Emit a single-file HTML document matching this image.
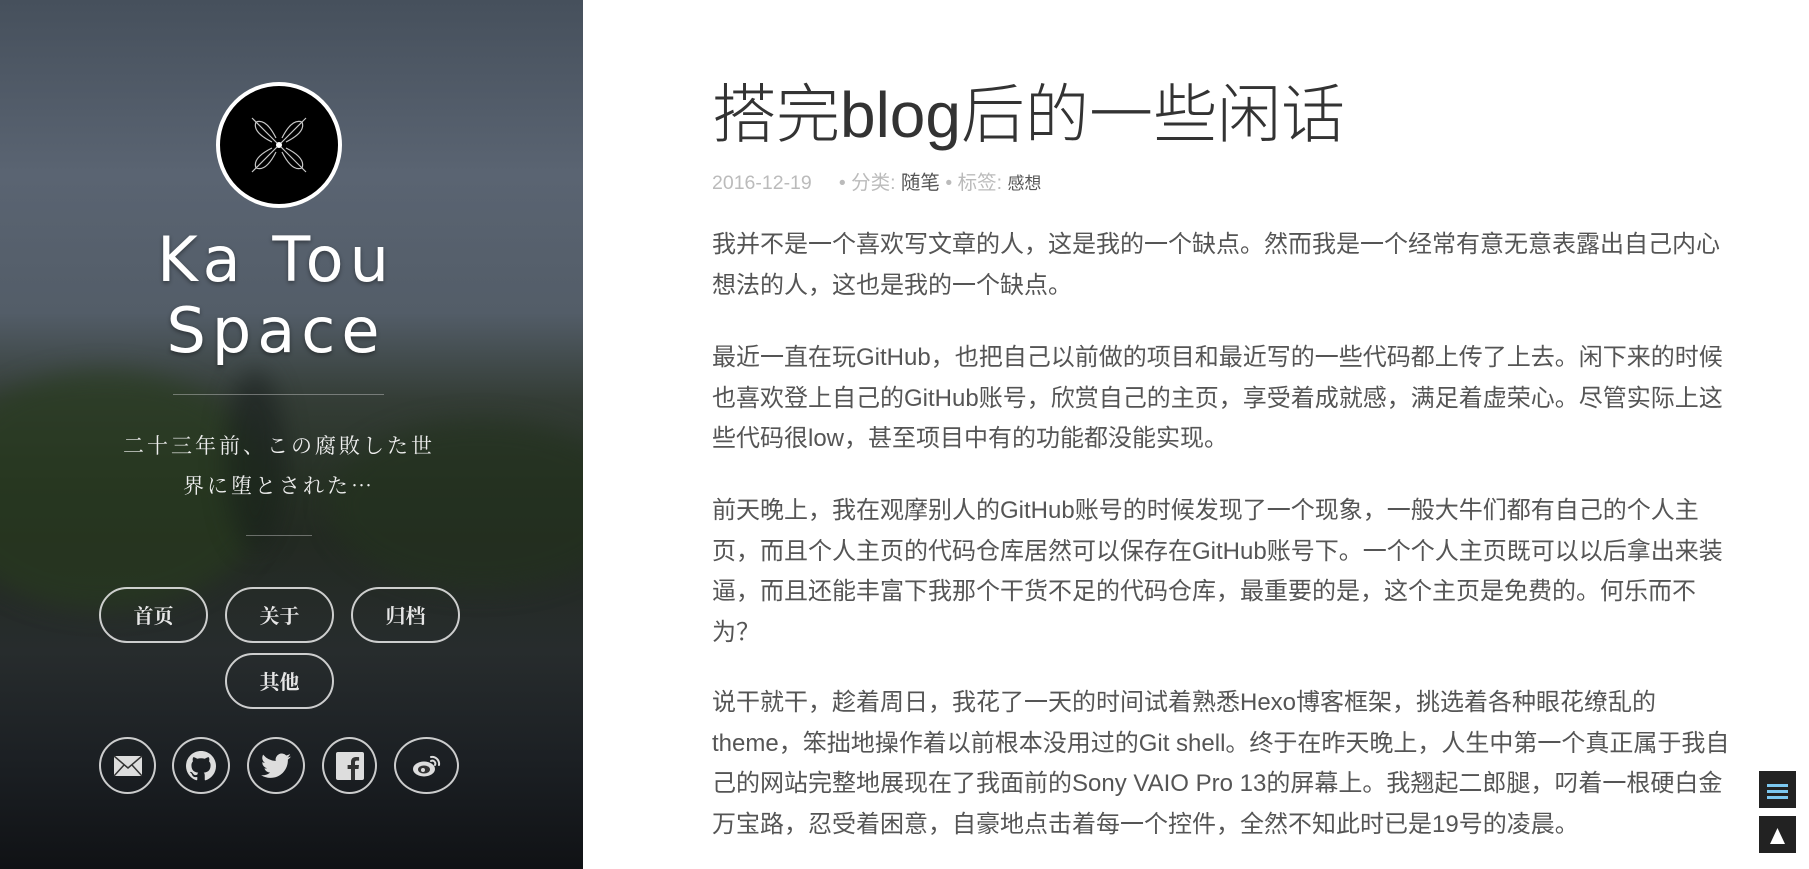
<!DOCTYPE html>
<html><head><meta charset="utf-8">
<style>
*{margin:0;padding:0;box-sizing:border-box}
html,body{width:1809px;height:869px;overflow:hidden;background:#fff}
.side{position:absolute;left:0;top:0;width:583px;height:869px;overflow:hidden;
background:linear-gradient(180deg,#46505c 0%,#5a6472 20%,#535d68 36%,#343d36 46%,#263024 56%,#232a22 62%,#272c2d 75%,#1b1f23 88%,#101215 100%);}
.blob{position:absolute;border-radius:50%;filter:blur(12px)}
.avatar{position:absolute;left:216px;top:82px;width:126px;height:126px;border-radius:50%;background:#000;border:4px solid #fff}
.title{position:absolute;left:0;width:552px;text-align:center;color:#fff;font-family:"DejaVu Sans",sans-serif;font-size:62px;letter-spacing:6px;line-height:71px;top:224px;text-shadow:0 2px 4px rgba(0,0,0,.4)}
.hr{position:absolute;height:1px;background:rgba(200,200,200,.45)}
.sub{position:absolute;left:0;width:558px;text-align:center;color:#eee;font-family:"Noto Serif CJK SC","Noto Sans CJK JP",serif;font-size:21px;letter-spacing:3px;line-height:40px;top:425px}
.btn{position:absolute;width:109px;height:56px;border:2px solid rgba(235,235,235,.85);border-radius:28px;color:#e6e6e6;font-family:"Noto Serif CJK SC",serif;font-weight:bold;font-size:20px;text-align:center;line-height:52px}
.ic{position:absolute;top:737px;height:57px;border:2px solid rgba(235,235,235,.85);border-radius:50%;display:flex;align-items:center;justify-content:center}
.main{position:absolute;left:712px;top:0;width:1080px;font-family:"Liberation Sans","Noto Sans CJK SC",sans-serif}
h1{position:absolute;top:64px;font-weight:300;font-size:64px;color:#333;white-space:nowrap;letter-spacing:0}
.meta{position:absolute;top:166px;font-size:19.5px;color:#bbb;white-space:nowrap}
.meta b{font-weight:normal;color:#555}
.p{position:absolute;font-size:24px;color:#555;line-height:40.7px;white-space:nowrap}
.fb{position:absolute;left:1759px;width:37px;height:37px;background:#222;}
</style></head><body>
<div class="side">
 <div class="blob" style="left:-60px;top:370px;width:330px;height:240px;background:rgba(40,60,30,.6)"></div>
 <div class="blob" style="left:330px;top:420px;width:300px;height:170px;background:rgba(35,50,30,.6)"></div>
 <div class="blob" style="left:225px;top:370px;width:60px;height:180px;background:rgba(20,25,25,.5)"></div>
 <div class="avatar">
  <svg width="118" height="118" viewBox="0 0 118 118">
   <g stroke="#ddd" stroke-width="1.2" fill="none" opacity=".9">
    <path d="M59 59 L32 32 M59 59 L86 32 M59 59 L32 86 M59 59 L86 86"/>
    <path d="M36 36 q10 -4 20 16 M36 36 q-4 10 16 20 M82 36 q-10 -4 -20 16 M82 36 q4 10 -16 20 M36 82 q10 4 20 -16 M36 82 q-4 -10 16 -20 M82 82 q-10 4 -20 -16 M82 82 q4 -10 -16 -20"/>
   </g>
   <circle cx="59" cy="59" r="3" fill="#fff"/>
  </svg>
 </div>
 <div class="title">Ka Tou<br>Space</div>
 <div class="hr" style="left:173px;top:394px;width:211px"></div>
 <div class="sub">二十三年前、この腐敗した世<br>界に堕とされた…</div>
 <div class="hr" style="left:246px;top:535px;width:66px"></div>
 <div class="btn" style="left:99px;top:587px">首页</div>
 <div class="btn" style="left:225px;top:587px">关于</div>
 <div class="btn" style="left:351px;top:587px">归档</div>
 <div class="btn" style="left:225px;top:653px">其他</div>
 <div class="ic" style="left:99px;width:57px"><svg width="30" height="24" viewBox="0 0 30 24"><rect x="1" y="2" width="28" height="20" fill="#ddd"/><path d="M1 2 L15 14 L29 2 M1 22 L11 11 M29 22 L19 11" stroke="#333" stroke-width="1.5" fill="none"/></svg></div>
 <div class="ic" style="left:172px;width:58px"><svg width="30" height="30" viewBox="0 0 16 16"><path fill="#ddd" d="M8 0C3.58 0 0 3.58 0 8c0 3.54 2.29 6.53 5.47 7.59.4.07.55-.17.55-.38v-1.34c-2.23.48-2.7-1.07-2.7-1.07-.36-.92-.89-1.17-.89-1.17-.73-.5.05-.49.05-.49.8.06 1.23.83 1.23.83.71 1.23 1.87.87 2.33.66.07-.52.28-.87.5-1.07-1.78-.2-3.64-.89-3.64-3.95 0-.87.31-1.59.83-2.15-.08-.2-.36-1.02.08-2.12 0 0 .67-.21 2.2.82a7.6 7.6 0 0 1 4 0c1.53-1.04 2.2-.82 2.2-.82.44 1.1.16 1.92.08 2.12.51.56.82 1.27.82 2.15 0 3.07-1.87 3.75-3.65 3.95.29.25.54.73.54 1.48v2.2c0 .21.15.46.55.38A8.01 8.01 0 0 0 16 8c0-4.42-3.58-8-8-8z"/></svg></div>
 <div class="ic" style="left:247px;width:58px"><svg width="30" height="26" viewBox="0 0 24 20"><path fill="#ddd" d="M24 2.4a9.8 9.8 0 0 1-2.8.8A4.9 4.9 0 0 0 23.3.4a9.9 9.9 0 0 1-3.1 1.2A4.9 4.9 0 0 0 11.8 6 14 14 0 0 1 1.7.9a4.9 4.9 0 0 0 1.5 6.6A4.9 4.9 0 0 1 1 6.9a4.9 4.9 0 0 0 3.9 4.9 4.9 4.9 0 0 1-2.2.1 4.9 4.9 0 0 0 4.6 3.4A9.9 9.9 0 0 1 0 17.3 14 14 0 0 0 7.5 19.5c9.1 0 14-7.5 14-14v-.6A10 10 0 0 0 24 2.4z"/></svg></div>
 <div class="ic" style="left:322px;width:55px"><svg width="28" height="28" viewBox="0 0 28 28"><rect width="28" height="28" rx="2" fill="#ddd"/><path d="M19 28V17h3.5l.5-4h-4v-2.5c0-1.1.4-1.9 2-1.9h2.1V5.1A27 27 0 0 0 20 5c-3 0-5 1.8-5 5.1V13h-3.4v4H15v11z" fill="#333"/></svg></div>
 <div class="ic" style="left:394px;width:65px"><svg width="30" height="24" viewBox="0 0 30 24"><ellipse cx="12" cy="15" rx="11" ry="7.5" fill="#ddd"/><ellipse cx="12" cy="15.5" rx="6" ry="4" fill="#333"/><circle cx="11" cy="16" r="2" fill="#ddd"/><path d="M19 3a7 7 0 0 1 8 8M19 7a3 3 0 0 1 4 4" stroke="#ddd" stroke-width="2" fill="none" stroke-linecap="round"/></svg></div>
</div>
<div class="main">
 <h1>搭完blog后的一些闲话</h1>
 <div class="meta">2016-12-19 &nbsp;&nbsp;&nbsp; • 分类: <b>随笔</b> • 标签: <b style="font-size:17px">感想</b></div>
 <div class="p" style="top:225px">我并不是一个喜欢写文章的人，这是我的一个缺点。然而我是一个经常有意无意表露出自己内心<br>想法的人，这也是我的一个缺点。</div>
 <div class="p" style="top:338px">最近一直在玩GitHub，也把自己以前做的项目和最近写的一些代码都上传了上去。闲下来的时候<br>也喜欢登上自己的GitHub账号，欣赏自己的主页，享受着成就感，满足着虚荣心。尽管实际上这<br>些代码很low，甚至项目中有的功能都没能实现。</div>
 <div class="p" style="top:491px">前天晚上，我在观摩别人的GitHub账号的时候发现了一个现象，一般大牛们都有自己的个人主<br>页，而且个人主页的代码仓库居然可以保存在GitHub账号下。一个个人主页既可以以后拿出来装<br>逼，而且还能丰富下我那个干货不足的代码仓库，最重要的是，这个主页是免费的。何乐而不<br>为？</div>
 <div class="p" style="top:683px">说干就干，趁着周日，我花了一天的时间试着熟悉Hexo博客框架，挑选着各种眼花缭乱的<br>theme，笨拙地操作着以前根本没用过的Git shell。终于在昨天晚上，人生中第一个真正属于我自<br>己的网站完整地展现在了我面前的Sony VAIO Pro 13的屏幕上。我翘起二郎腿，叼着一根硬白金<br>万宝路，忍受着困意，自豪地点击着每一个控件，全然不知此时已是19号的凌晨。</div>
</div>
<div class="fb" style="top:771px"><svg width="37" height="37"><rect x="8" y="13" width="21" height="3" fill="#7cc8f0"/><rect x="8" y="19" width="21" height="3" fill="#7cc8f0"/><rect x="8" y="25" width="21" height="3" fill="#7cc8f0"/></svg></div>
<div class="fb" style="top:816px"><svg width="37" height="37"><path d="M18.5 12 L26 28 H11 Z" fill="#fff"/></svg></div>
</body></html>
